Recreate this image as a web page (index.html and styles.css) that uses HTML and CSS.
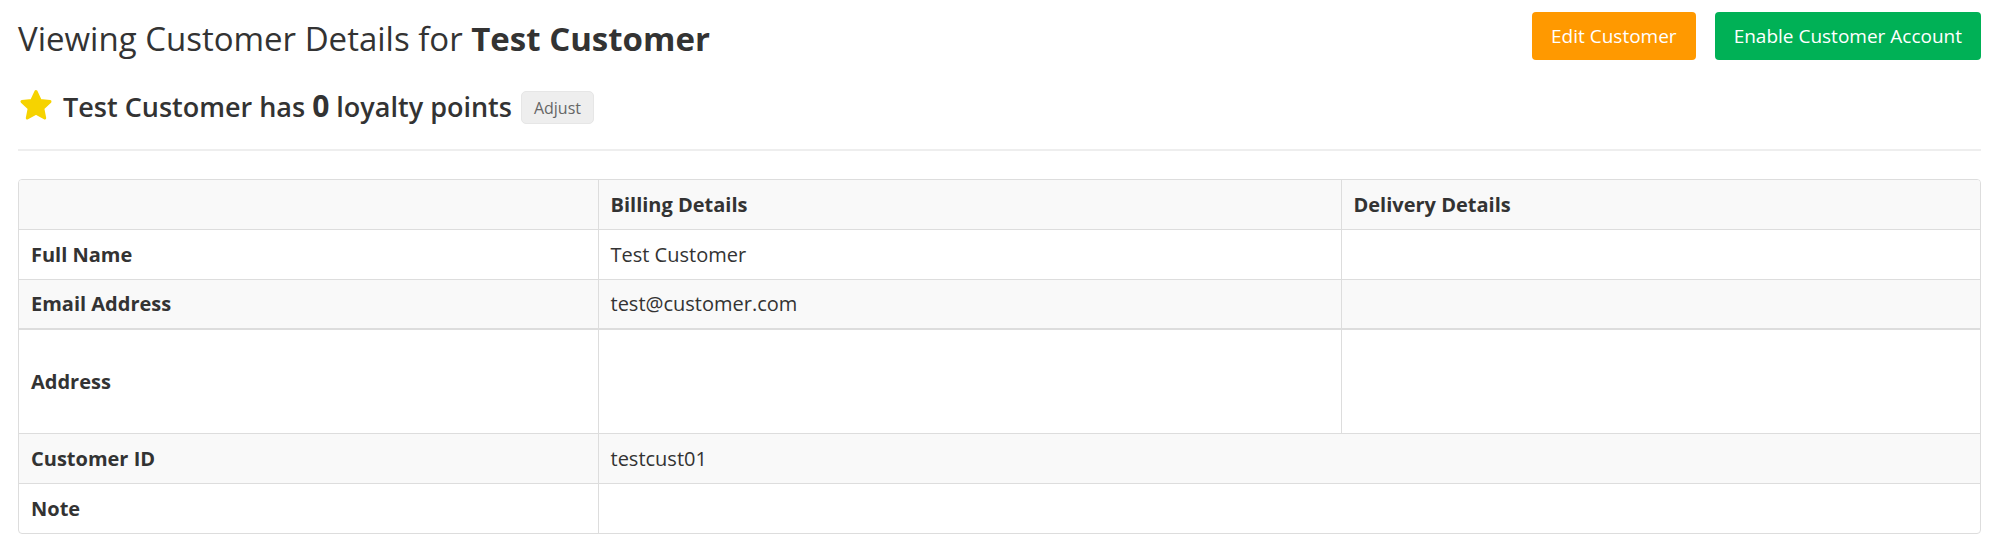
FILE: index.html
```html
<!DOCTYPE html>
<html>
<head>
<meta charset="utf-8">
<link rel="stylesheet" href="styles.css">
</head>
<body>
<div class="page">
  <div class="header">
    <div class="header-left">
      <h1 class="title">Viewing Customer Details for <strong>Test Customer</strong></h1>
      <div class="loyalty">
        <svg class="star" viewBox="0 0 34 32" width="34" height="32"><path d="M17 2.5 L21.2 11.4 L31 12.6 L23.8 19.3 L25.7 29 L17 24.2 L8.3 29 L10.2 19.3 L3 12.6 L12.8 11.4 Z" fill="#f6d300" stroke="#f6d300" stroke-width="3" stroke-linejoin="round"/></svg>
        <span class="loyalty-text">Test Customer has <b>0</b> loyalty points</span>
        <button class="btn-adjust">Adjust</button>
      </div>
    </div>
    <div class="header-actions">
      <button class="btn btn-orange">Edit Customer</button>
      <button class="btn btn-green">Enable Customer Account</button>
    </div>
  </div>
  <hr class="divider">
  <div class="table-wrap">
    <table class="details">
      <colgroup>
        <col class="c1"><col class="c2"><col class="c3">
      </colgroup>
      <tr class="stripe">
        <th></th><th>Billing Details</th><th>Delivery Details</th>
      </tr>
      <tr>
        <th>Full Name</th><td>Test Customer</td><td></td>
      </tr>
      <tr class="stripe">
        <th>Email Address</th><td>test@customer.com</td><td></td>
      </tr>
      <tr class="tall">
        <th>Address</th><td></td><td></td>
      </tr>
      <tr class="stripe">
        <th>Customer ID</th><td colspan="2">testcust01</td>
      </tr>
      <tr>
        <th>Note</th><td colspan="2"></td>
      </tr>
    </table>
  </div>
</div>
</body>
</html>
```
FILE: styles.css
```css
* { box-sizing: border-box; }
html, body { margin: 0; padding: 0; background: #fff; }
body {
  font-family: "Open Sans", "Noto Sans", sans-serif;
  color: #333;
}
.page {
  padding: 12px 19px 0 18px;
}
.header {
  display: flex;
  justify-content: space-between;
  align-items: flex-start;
}
.title {
  margin: 0;
  padding-top: 7px;
  font-size: 33px;
  font-weight: 400;
  line-height: 40px;
  color: #333;
}
.title strong { font-weight: 700; }
.loyalty {
  display: flex;
  align-items: center;
  margin-top: 29px;
  height: 34px;
}
.star { display: block; margin-right: 10px; margin-left: 1px; }
.loyalty-text {
  font-size: 27px;
  font-weight: 600;
  color: #333;
}
.loyalty-text b { font-weight: 700; font-size: 30px; }
.btn-adjust {
  margin-left: 9px;
  margin-top: 5px;
  height: 33px;
  padding: 0 12px;
  font-family: inherit;
  font-size: 16px;
  color: #666;
  background: #eee;
  border: 1px solid #e6e6e6;
  border-radius: 5px;
}
.header-actions {
  display: flex;
  gap: 19px;
}
.btn {
  height: 48px;
  padding: 0 19px;
  font-family: inherit;
  font-size: 19px;
  color: #fff;
  border: none;
  border-radius: 4px;
}
.btn-orange { background: #ff9900; }
.btn-green { background: #00b156; }
.divider {
  margin: 27px 0 0;
  border: 0;
  border-top: 2px solid #eee;
}
.table-wrap {
  margin-top: 28px;
  border: 1px solid #ddd;
  border-radius: 4px;
  overflow: hidden;
}
.details {
  width: 100%;
  border-collapse: collapse;
  table-layout: fixed;
  font-size: 20px;
}
.c1 { width: 579px; }
.c2 { width: 743px; }
.details th, .details td {
  text-align: left;
  height: 50px;
  padding: 0 12px;
  border-left: 1px solid #ddd;
  border-top: 1px solid #ddd;
  vertical-align: middle;
}
.details th { font-weight: 700; color: #333; }
.details td { font-weight: 400; color: #333; }
.details tr:first-child th, .details tr:first-child td { border-top: none; height: 49px; }
.details th:first-child { border-left: none; }
.details tr.stripe { background: #f9f9f9; }
.details tr.tall th, .details tr.tall td { height: 104px; border-top-width: 2px; }
```
